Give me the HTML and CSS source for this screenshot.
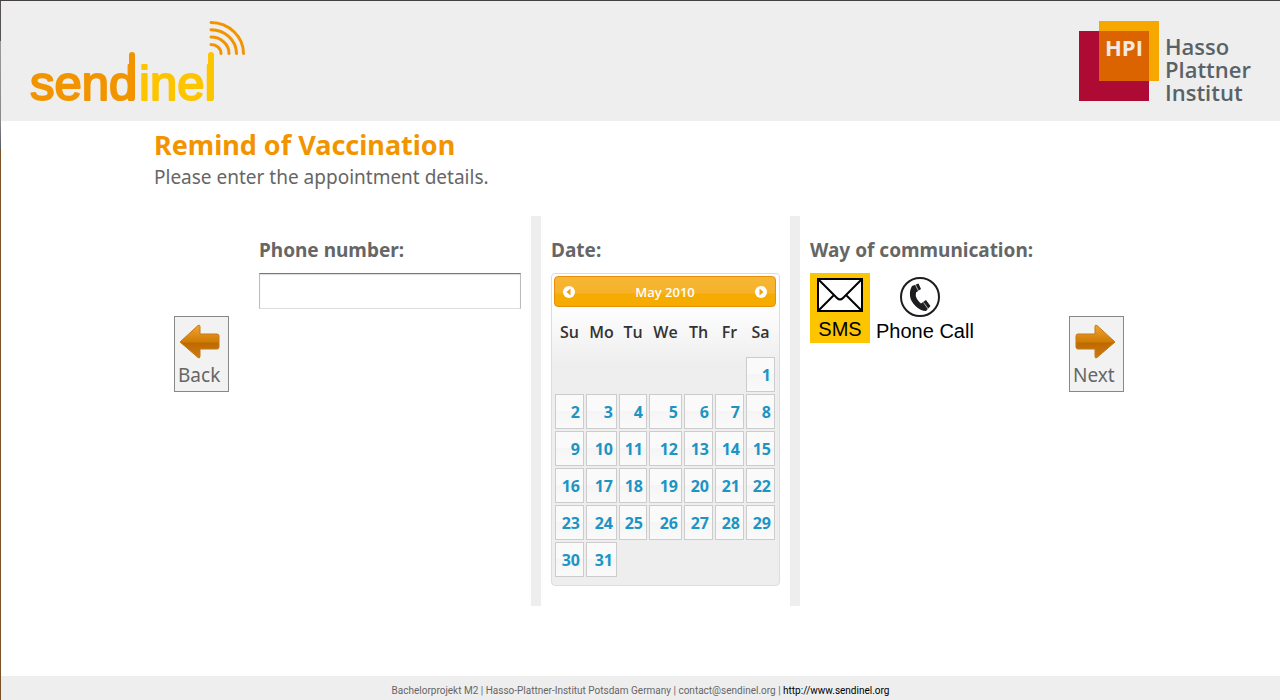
FILE: index.html
```html
<!DOCTYPE html>
<html lang="en">
<head>
<meta charset="utf-8">
<title>Remind of Vaccination</title>
<link rel="stylesheet" href="styles.css">
</head>
<body>
<header class="top">
  <svg class="logo" width="220" height="98" viewBox="0 0 220 98" role="img" aria-label="sendinel">
    <text class="logo-text logo-dark" x="1" y="79">send</text>
    <text class="logo-text logo-light" x="110" y="79">inel</text>
    <path d="M103 34V77" stroke="#f29400" stroke-width="6" stroke-linecap="round"/>
    <path d="M182 34V77" stroke="#fdc400" stroke-width="6" stroke-linecap="round"/>
    <g fill="none" stroke="#f29400" stroke-width="3" stroke-linecap="round">
      <path d="M182 23.500a10 9 0 0 1 10 9"/>
      <path d="M182 16a18 16.500 0 0 1 18 16.500"/>
      <path d="M182 8.800a25.500 24 0 0 1 25.500 23.700"/>
      <path d="M182 1.500a33 31 0 0 1 32.500 31"/>
    </g>
  </svg>
  <svg class="hpi" width="176" height="98" viewBox="0 0 176 98" role="img" aria-label="HPI Hasso Plattner Institut">
    <path fill="#ad0b33" d="M0 10h70v70H0z"/>
    <path fill="#f7a800" d="M20 0h60v60H20z"/>
    <path fill="#db6400" d="M20 10h50v50H20z"/>
    <text class="hpi-short" x="26" y="35">HPI</text>
    <g class="hpi-name">
      <text x="86" y="34">Hasso</text>
      <text x="86" y="57">Plattner</text>
      <text x="86" y="80">Institut</text>
    </g>
  </svg>
</header>
<main class="page">
  <h1 class="title">Remind of Vaccination</h1>
  <p class="lead">Please enter the appointment details.</p>
  <form class="steps">
    <button class="nav" type="button">
      <svg width="42" height="36" viewBox="0 0 42 36" aria-hidden="true">
        <defs><linearGradient id="amber" x1="0" y1="0" x2="0" y2="1"><stop offset="0" stop-color="#f2a52d"/><stop offset=".5" stop-color="#d07c06"/><stop offset=".55" stop-color="#bd6a00"/><stop offset="1" stop-color="#cf7a10"/></linearGradient></defs>
        <path d="M1 18L19 1.500q2-1 2 1V10h17q2 0 2 2v11q0 2-2 2H21v7q0 3-2 1.500z" fill="url(#amber)" stroke="#c17a1c"/>
      </svg>
      <span>Back</span>
    </button>
    <section class="col col-phone">
      <label class="heading" for="phone">Phone number:</label>
      <input class="phone" id="phone" type="text">
    </section>
    <section class="col col-date">
      <h2 class="heading">Date:</h2>
      <div class="calendar">
        <div class="cal-head">
          <button class="cal-nav" type="button" aria-label="Previous month"><svg width="12" height="12" viewBox="0 0 12 12"><circle cx="6" cy="6" r="6" fill="#fff"/><path d="M7.500 2.500v7L3.500 6z" fill="#f0a010"/></svg></button>
          <span>May 2010</span>
          <button class="cal-nav" type="button" aria-label="Next month"><svg width="12" height="12" viewBox="0 0 12 12"><circle cx="6" cy="6" r="6" fill="#fff"/><path d="M4.500 2.500v7l4-3.500z" fill="#f0a010"/></svg></button>
        </div>
        <table class="days">
          <colgroup><col class="w31"><col class="w33"><col class="w30"><col class="w35"><col class="w31"><col class="w31"><col class="w31"></colgroup>
          <thead><tr><th>Su</th><th>Mo</th><th>Tu</th><th>We</th><th>Th</th><th>Fr</th><th>Sa</th></tr></thead>
          <tbody>
            <tr><td></td><td></td><td></td><td></td><td></td><td></td><td><a href="#">1</a></td></tr>
            <tr><td><a href="#">2</a></td><td><a href="#">3</a></td><td><a href="#">4</a></td><td><a href="#">5</a></td><td><a href="#">6</a></td><td><a href="#">7</a></td><td><a href="#">8</a></td></tr>
            <tr><td><a href="#">9</a></td><td><a href="#">10</a></td><td><a href="#">11</a></td><td><a href="#">12</a></td><td><a href="#">13</a></td><td><a href="#">14</a></td><td><a href="#">15</a></td></tr>
            <tr><td><a href="#">16</a></td><td><a href="#">17</a></td><td><a href="#">18</a></td><td><a href="#">19</a></td><td><a href="#">20</a></td><td><a href="#">21</a></td><td><a href="#">22</a></td></tr>
            <tr><td><a href="#">23</a></td><td><a href="#">24</a></td><td><a href="#">25</a></td><td><a href="#">26</a></td><td><a href="#">27</a></td><td><a href="#">28</a></td><td><a href="#">29</a></td></tr>
            <tr><td><a href="#">30</a></td><td><a href="#">31</a></td><td></td><td></td><td></td><td></td><td></td></tr>
          </tbody>
        </table>
      </div>
    </section>
    <section class="col col-way">
      <h2 class="heading">Way of communication:</h2>
      <div class="ways">
        <button class="way way-sms" type="button" aria-pressed="true">
          <svg width="46" height="34" viewBox="0 0 46 34" aria-hidden="true"><g fill="#fff" stroke="#000" stroke-width="2"><path d="M1 1h44v32H1z"/><path fill="none" d="M1 1l19 19q3 3 6 0L45 1M1 33l16-16M45 33L29 17"/></g></svg>
          <span>SMS</span>
        </button>
        <button class="way way-call" type="button" aria-pressed="false">
          <svg width="40" height="40" viewBox="0 0 40 40" aria-hidden="true"><circle cx="20" cy="20" r="19" fill="#fff" stroke="#1d1d1f" stroke-width="2"/><path fill="#1d1d1f" d="M12 9l6.500-2.500L21 12l-5 3.500q-1 3.500 1 6.500t4 4.500l5-3.500 4.500 6-4.500 5q-5.500 0-10.500-5T10 19q-.500-6 2-10z"/><path d="M15 7l3.500 7M23.500 25.500l5 7" fill="none" stroke="#fff" stroke-width=".7"/></svg>
          <span>Phone Call</span>
        </button>
      </div>
    </section>
    <button class="nav" type="submit">
      <svg width="42" height="36" viewBox="0 0 42 36" aria-hidden="true">
        <path d="M41 18L23 1.500q-2-1-2 1V10H4q-2 0-2 2v11q0 2 2 2h17v7q0 3 2 1.500z" fill="url(#amber)" stroke="#c17a1c"/>
      </svg>
      <span>Next</span>
    </button>
  </form>
</main>
<footer class="foot">Bachelorprojekt M2 | Hasso-Plattner-Institut Potsdam Germany | contact@sendinel.org | <a href="http://www.sendinel.org">http://www.sendinel.org</a></footer>
</body>
</html>
```
FILE: styles.css
```css
* { box-sizing: border-box; }
html { background: #fff; }
body {
  margin: 0;
  min-height: 100vh;
  display: flex;
  flex-direction: column;
  padding-left: 1px;
  border-top: 1px solid #454045;
  background: linear-gradient(#565155 40px, #999 40px, #888 120px, #555b66 148px, #7d5127 149px) 0 0 / 1px 100% no-repeat;
  color: #666;
  font-family: "Noto Sans", "Lucida Grande", sans-serif;
}
button { margin: 0; padding: 0; border: 0; background: none; font: inherit; color: inherit; cursor: pointer; }
.top {
  display: flex;
  justify-content: space-between;
  height: 120px;
  padding: 20px 25px 0 28px;
  background: #eee;
}
.logo-text { font: 49px "Liberation Sans", Arial, sans-serif; stroke-width: 2px; stroke-linejoin: round; }
.logo-dark { fill: #f29400; stroke: #f29400; }
.logo-light { fill: #fdc400; stroke: #fdc400; }
.hpi-short { font: 700 22px "Open Sans", sans-serif; fill: #f3e9e2; }
.hpi-name { font: 600 22px "Open Sans", sans-serif; fill: #596367; }
.page { width: 100%; max-width: 973px; margin: 0 auto; flex: 1; }
.title { margin: 6px 0 0; font-size: 27px; line-height: 36px; color: #f29400; }
.lead { margin: 0; font-size: 19px; line-height: 28px; }
.steps { display: flex; align-items: flex-start; padding: 0 3px 0 20px; margin: 25px 0 70px; }
.nav {
  display: flex;
  flex-direction: column;
  width: 55px;
  height: 76px;
  margin-top: 100px;
  padding: 7px 3px 0;
  flex: none;
  border: 1px solid #888;
  background: #f2f2f2;
  font-size: 19px;
  line-height: 30px;
  text-align: left;
}
.nav svg { margin-left: 1px; flex: none; }
.col { min-height: 390px; padding: 20px 10px; }
.col-phone { width: 292px; margin-left: 20px; border-right: 10px solid #eee; }
.col-date { width: 259px; border-right: 10px solid #eee; }
.col-way { flex: 1; margin-right: 10px; }
.heading { display: block; margin: 0 0 9px; font-size: 19px; font-weight: 700; line-height: 28px; white-space: nowrap; }
.phone {
  display: block;
  width: 100%;
  height: 36px;
  padding: 0 6px;
  border: 1px solid #bbb;
  border-top-color: #777;
  border-bottom-color: #ddd;
  box-shadow: inset 0 1px 1px #ddd;
  font: inherit;
}
.calendar {
  padding: 2px 3px 7px 2px;
  border: 1px solid #ddd;
  border-radius: 4px;
  background: linear-gradient(#fff 30px, #eee 90px);
  font-family: "Open Sans", "Trebuchet MS", sans-serif;
}
.cal-head {
  display: flex;
  align-items: center;
  justify-content: space-between;
  height: 31px;
  padding: 0 8px;
  border: 1px solid #e78f08;
  border-radius: 4px;
  background: linear-gradient(#f6b733 0, #f6b22b 55%, #f5ab00 60%);
  color: #fff;
  font-size: 13px;
  font-weight: 600;
}
.cal-nav { display: flex; }
.days { width: 222px; border-collapse: collapse; table-layout: fixed; font-size: 16px; }
.w30 { width: 30px; }
.w31 { width: 31px; }
.w33 { width: 33px; }
.w35 { width: 35px; }
.days th { height: 49px; padding: 0; color: #333; font-weight: 600; text-align: center; }
.days td { height: 37px; padding: 1px; }
.days a {
  display: block;
  height: 35px;
  padding-right: 3px;
  border: 1px solid #ccc;
  background: linear-gradient(#fafafa 50%, #f5f5f5 50%, #fafafa);
  color: #1c94c4;
  font-weight: 700;
  line-height: 35px;
  text-align: right;
  text-decoration: none;
}
.ways { display: flex; gap: 6px; color: #000; font: 20px/24px "Liberation Sans", Arial, sans-serif; }
.way { display: flex; flex-direction: column; align-items: center; padding-top: 4px; white-space: nowrap; }
.way span { margin-top: 2px; }
.way-call { align-items: flex-start; }
.way-call svg { margin-left: 24px; }
.way-sms { width: 60px; height: 70px; padding-top: 5px; background: #fdc400; }
.way-sms span { margin-top: 5px; }
.foot { height: 24px; background: #eee; font: 10px/29px Roboto, "Lucida Grande", sans-serif; text-align: center; }
.foot a { color: #000; text-decoration: none; }
```
